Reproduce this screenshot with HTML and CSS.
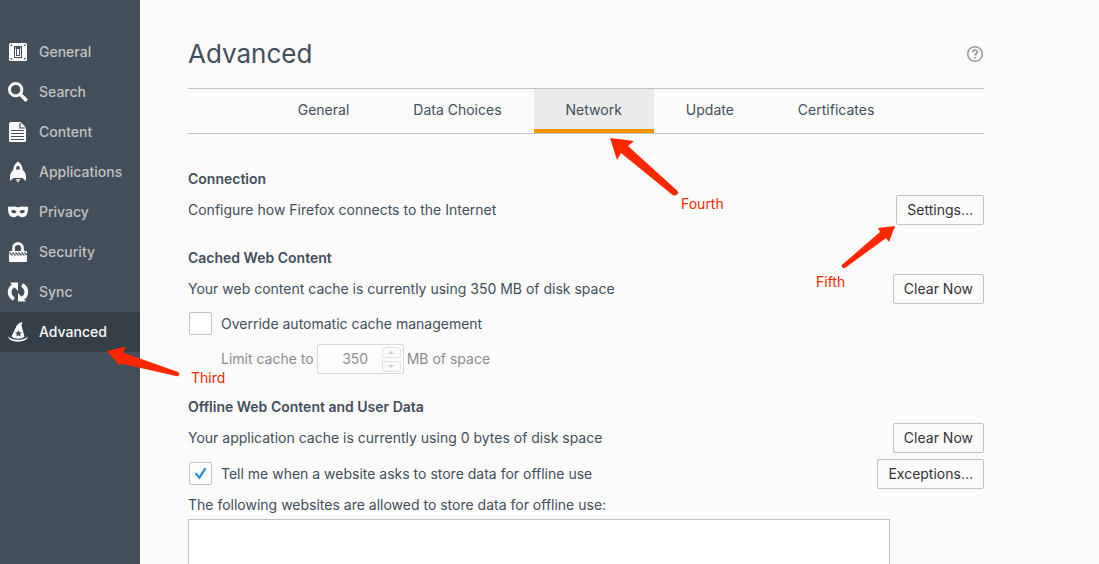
FILE: index.html
```html
<!DOCTYPE html>
<html lang="en">
<head>
<meta charset="utf-8">
<title>Advanced preferences</title>
<link rel="stylesheet" href="styles.css">
</head>
<body>
<nav class="sidebar" aria-label="Categories">
  <a class="category" href="#general">
    <svg class="icon" viewBox="0 0 20 20"><rect x="1" y="1" width="18" height="18" rx="1.500"/><path class="cut" d="M6 4h8v12H6zM2.500 2.500H4V4H2.500zM16 2.500h1.500V4H16zM2.500 16H4v1.500H2.500zM16 16h1.500v1.500H16z"/><path d="M7 5h6v10H7z"/><path class="cut" d="M7.500 5h5v2h-5zM8 6h1v8H8zM11 6h1v8h-1zM8 13h4v1H8z"/></svg>
    General</a>
  <a class="category" href="#search">
    <svg class="icon" viewBox="0 0 20 20"><circle class="line" cx="7.700" cy="7.700" r="6.200" stroke-width="2.900"/><path class="line" d="M12 12l6.700 6.700" stroke-width="3.600"/></svg>
    Search</a>
  <a class="category" href="#content">
    <svg class="icon" viewBox="0 0 20 20"><path d="M3 0h9.500L18 5.500V19a1 1 0 0 1-1 1H2a1 1 0 0 1-1-1V2a2 2 0 0 1 2-2z"/><path class="cut-line" d="M12 1v5h5.500M3 8.500h13M3 11.500h13M3 14.500h13M3 17.500h13" stroke-width="1.200"/></svg>
    Content</a>
  <a class="category" href="#applications">
    <svg class="icon" viewBox="0 0 20 20"><path d="M10 -.5c3.200 2 4.500 5 4.800 8.500 2 1.500 3.200 4 3.200 6.500V19l-3.500-3h-9L2 19v-4.500C2 12 3.200 9.500 5.200 8 5.500 4.500 6.800 1.500 10-.5z"/><path class="cut" d="M8.500 4.500c.8-.8 2.200-.8 3 0l.5 3H8z"/><path d="M7.500 17h5L10 21z" opacity=".75"/></svg>
    Applications</a>
  <a class="category" href="#privacy">
    <svg class="icon" viewBox="0 0 20 20"><path fill-rule="evenodd" d="M0 4.500c2 .7 4 0 6 0 1.700 0 3 .8 4 .8s2.300-.8 4-.8c2 0 4 .7 6 0 0 2.500 0 5-.8 7-.8 2.700-2.700 3.800-5 3.800-2 0-3-1.800-4.200-1.800S7.800 15.300 5.800 15.300c-2.300 0-4.200-1.100-5-3.800C0 9.500 0 7 0 4.500zM3 9.500c1.500 2.300 4 2.300 5.500.5C7 7.500 4.500 7.500 3 9.500zM17 9.500c-1.500 2.300-4 2.300-5.500.5 1.500-2.500 4-2.500 5.500-.5z"/></svg>
    Privacy</a>
  <a class="category" href="#security">
    <svg class="icon" viewBox="0 0 20 20"><path class="line" d="M5.500 10V6a4.500 4.500 0 0 1 9 0v4" stroke-width="2.800"/><path d="M2 9h16a1 1 0 0 1 1 1v9a1 1 0 0 1-1 1H2a1 1 0 0 1-1-1v-9a1 1 0 0 1 1-1z"/><path class="cut-line" d="M1.500 10.500l3 3M4.500 10.500l3 3M7.500 10.500l3 3M10.500 10.500l3 3M13.500 10.500l3 3M16.500 10.500l2.500 2.500" stroke-width="1.200"/></svg>
    Security</a>
  <a class="category" href="#sync">
    <svg class="icon" viewBox="0 0 20 20"><path class="line" d="M6 3.500C0 6.500.5 14 6 17M14 16.500C20 13.500 19.500 6 14 3" stroke-width="3.800"/><path d="M2 .5h8v8.500zM18 19.500h-8V11z"/></svg>
    Sync</a>
  <a class="category selected" href="#advanced" aria-current="page">
    <svg class="icon" viewBox="0 0 20 20"><path d="M14.500 0l-1 3.500 3 11C14 17.500 6 17.500 3.500 14.500L8.500 4C10 1.500 12 .5 14.500 0z"/><path d="M.5 14c1.500 5 17.500 5 19 0 1.500 7.500-20.500 7.500-19 0z"/><path class="cut" d="M10.500 8l1 2.300 2.500.2-1.900 1.600.6 2.400-2.200-1.300-2.200 1.300.6-2.400L7 10.500l2.500-.2z"/></svg>
    Advanced</a>
</nav>

<main class="main">
  <div class="content">
    <header class="header">
      <h1 class="title">Advanced</h1>
      <button class="help" type="button" aria-label="Help">
        <svg viewBox="0 0 18 18"><circle cx="9" cy="9" r="7.300" stroke-width="1.500"/><path d="M6.800 7.300C6.800 4.300 11.300 4.500 11.300 7c0 1.700-2.300 1.700-2.300 3.600M9 12v1.600" stroke-width="1.800"/></svg>
      </button>
    </header>

    <div class="tabs" role="tablist">
      <button class="tab" role="tab" type="button">General</button>
      <button class="tab" role="tab" type="button">Data Choices</button>
      <button class="tab active" role="tab" type="button" aria-selected="true">Network</button>
      <button class="tab" role="tab" type="button">Update</button>
      <button class="tab" role="tab" type="button">Certificates</button>
    </div>

    <section class="group">
      <h2 class="group-title">Connection</h2>
      <div class="row">
        <span>Configure how Firefox connects to the Internet</span>
        <button class="button" type="button">Settings…</button>
      </div>
    </section>

    <section class="group">
      <h2 class="group-title">Cached Web Content</h2>
      <div class="row">
        <span>Your web content cache is currently using 350 MB of disk space</span>
        <button class="button" type="button">Clear Now</button>
      </div>
      <label class="check override"><input class="checkbox" type="checkbox">Override automatic cache management</label>
      <div class="limit">
        <label for="cache-size">Limit cache to</label>
        <div class="number">
          <input class="number-input" id="cache-size" type="text" inputmode="numeric" value="350" disabled>
          <div class="spinner">
            <button class="spin up" type="button" aria-label="Increase" disabled><svg viewBox="0 0 6 3"><path d="M0 3l3-3 3 3z"/></svg></button>
            <button class="spin down" type="button" aria-label="Decrease" disabled><svg viewBox="0 0 6 3"><path d="M0 0l3 3 3-3z"/></svg></button>
          </div>
        </div>
        <span>MB of space</span>
      </div>
    </section>

    <section class="group">
      <h2 class="group-title">Offline Web Content and User Data</h2>
      <div class="row">
        <span>Your application cache is currently using 0 bytes of disk space</span>
        <button class="button" type="button">Clear Now</button>
      </div>
      <div class="row offline">
        <label class="check"><input class="checkbox" type="checkbox" checked>Tell me when a website asks to store data for offline use</label>
        <button class="button" type="button">Exceptions…</button>
      </div>
      <p class="list-label" id="sites-label">The following websites are allowed to store data for offline use:</p>
      <div class="sites" role="listbox" aria-labelledby="sites-label"></div>
    </section>
  </div>
</main>

<div class="notes">
  <svg class="arrows" width="900" height="400" viewBox="0 0 900 400"><path d="M107 351l19-4.500-3 6 55 19.500q2 1 1 3t-3 1l-53-12-4 1L119 365z"/><path d="M610 138l24 3-6 5 49 44.500q2 2 0 4t-5 0L621 153l-4 7z"/><path d="M895 226l-6 16-3-4-41 30q-2 1-3-1t1-3l37-32-2-4z"/></svg>
  <span class="note third">Third</span>
  <span class="note fourth">Fourth</span>
  <span class="note fifth">Fifth</span>
</div>
</body>
</html>
```
FILE: styles.css
```css
* { box-sizing: border-box; }

body {
  margin: 0;
  height: 100vh;
  display: flex;
  overflow: hidden;
  background: #fbfbfb;
  color: #424e5a;
  font: 14px/20px Inter, "Noto Sans", sans-serif;
}

button, input { font: inherit; }

.sidebar {
  flex: none;
  width: 140px;
  padding-top: 32px;
  background: #424f5a;
}

.category {
  display: flex;
  align-items: center;
  gap: 11px;
  height: 40px;
  padding-left: 8px;
  color: #c1c1c1;
  font-weight: 500;
  text-decoration: none;
}

.category.selected {
  background: #343f48;
  color: #fbfbfb;
}

.icon {
  flex: none;
  width: 20px;
  height: 20px;
  fill: #fbfbfb;
  overflow: visible;
}

.icon .line { fill: none; stroke: #fbfbfb; }
.icon .cut { fill: #424f5a; }
.icon .cut-line { fill: none; stroke: #424f5a; }

.main {
  flex: 1;
  min-width: 0;
  padding: 36px 48px 0;
  overflow: hidden;
}

.content { max-width: 796px; }

.header {
  display: flex;
  align-items: center;
  justify-content: space-between;
  margin-bottom: 16px;
}

.title {
  margin: 0;
  font-size: 26px;
  line-height: 36px;
  font-weight: 400;
}

.help {
  display: flex;
  padding: 0;
  border: 0;
  background: none;
}

.help svg {
  width: 18px;
  height: 18px;
  fill: none;
  stroke: #999;
}

.tabs {
  display: flex;
  justify-content: center;
  height: 46px;
  margin-bottom: 35px;
  border-top: 1px solid #c1c1c1;
  border-bottom: 1px solid #c1c1c1;
}

.tab {
  padding: 2px 32px 0;
  border: 0;
  border-bottom: 4px solid transparent;
  background: none;
  color: inherit;
}

.tab.active {
  border-bottom-color: #ff9500;
  background: #ebebeb;
}

.group { margin-bottom: 23px; }

.group-title {
  margin: 0 0 6px;
  font-size: 14px;
  line-height: 20px;
  font-weight: 600;
}

.row {
  display: flex;
  align-items: center;
  justify-content: space-between;
}

.offline { margin-top: 6px; }

.button {
  height: 30px;
  padding: 0 10px;
  border: 1px solid #c1c1c1;
  border-radius: 2px;
  background: #fbfbfb;
  color: #333;
}

.check {
  display: flex;
  align-items: center;
  gap: 9px;
}

.override { margin-top: 8px; }

.checkbox {
  appearance: none;
  flex: none;
  display: grid;
  place-items: center;
  width: 23px;
  height: 23px;
  margin: 0 0 1px 1px;
  border: 1px solid #c1c1c1;
  border-radius: 2px;
  background: #fff;
}

.checkbox:checked::before {
  content: "";
  width: 12px;
  height: 12px;
  background: #2292d9;
  clip-path: polygon(0 52%, 16% 42%, 38% 70%, 84% 0, 100% 10%, 42% 100%);
}

.limit {
  display: flex;
  align-items: center;
  gap: 3px;
  margin-top: 8px;
  padding-left: 33px;
  color: #8b8b8f;
}

.number {
  display: flex;
  align-items: center;
  width: 87px;
  height: 30px;
  padding-right: 2px;
  border: 1px solid #d8d8d8;
  border-radius: 2px;
  background: #fdfdfd;
}

.number-input {
  flex: 1;
  min-width: 0;
  padding: 0 0 0 11px;
  border: 0;
  background: none;
  color: #909090;
  text-align: center;
}

.spinner {
  display: flex;
  flex-direction: column;
  gap: 3px;
}

.spin {
  display: grid;
  place-items: center;
  width: 19px;
  height: 11px;
  padding: 0;
  border: 1px solid #e2e2e2;
  background: #fbfbfb;
}

.spin.up { border-radius: 4px 4px 0 0; }
.spin.down { border-radius: 0 0 4px 4px; }

.spin svg {
  width: 6px;
  height: 3px;
  fill: #ccc;
}

.list-label { margin: 6px 0 4px; }

.sites {
  max-width: 702px;
  height: 160px;
  border: 1px solid #c1c1c1;
  background: #fff;
}

.notes {
  position: absolute;
  top: 0;
  left: 0;
  color: #ff2600;
  pointer-events: none;
}

.arrows {
  display: block;
  fill: #ff2600;
}

.note { position: absolute; }
.third { left: 191px; top: 368px; }
.fourth { left: 681px; top: 194px; }
.fifth { left: 816px; top: 272px; }
```
